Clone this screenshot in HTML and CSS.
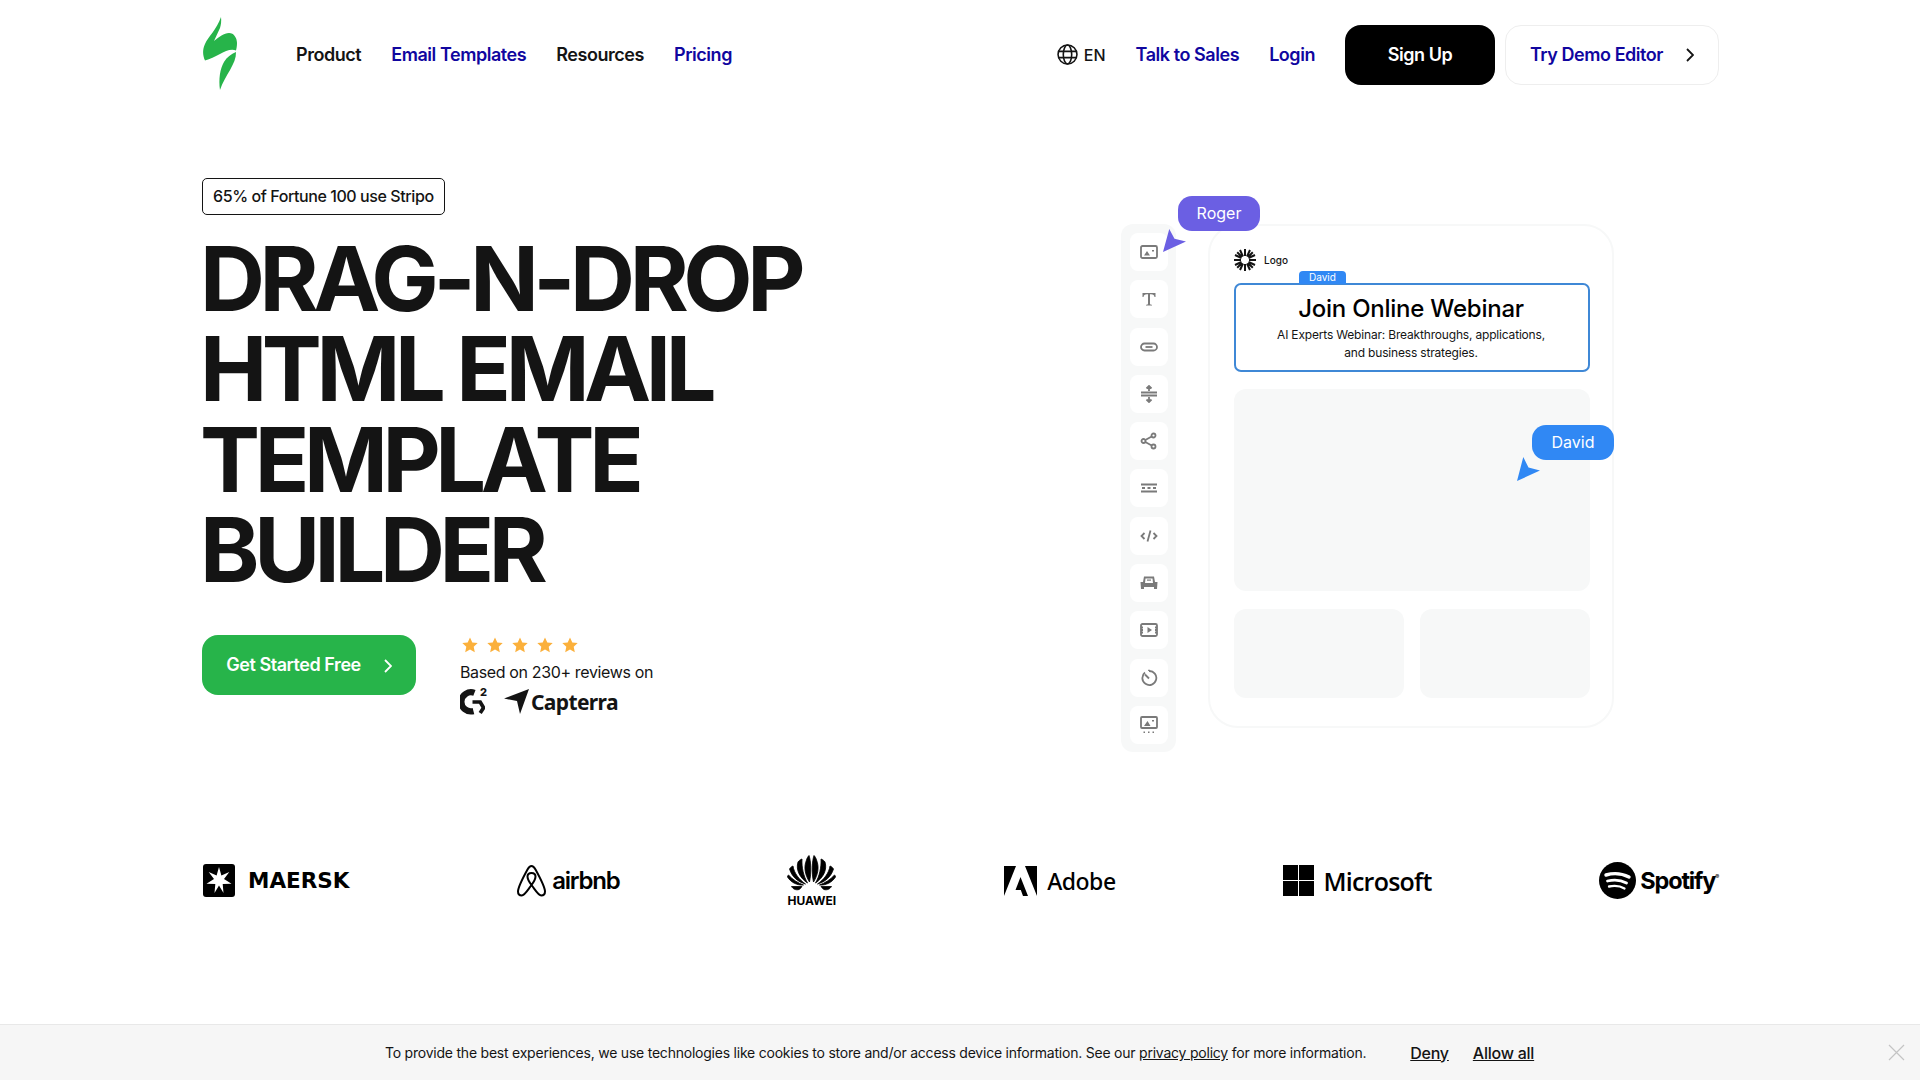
FILE: index.html
```html
<!DOCTYPE html>
<html lang="en">
  <head>
    <meta charset="utf-8">
    <title>Stripo</title>
    <link rel="stylesheet" href="styles.css">
  </head>
  <body>
    <div class="wrap">
      <header class="header">
        <svg class="logo" viewBox="0 0 36 74">
          <path fill="#27b44a" d="M19 0C19.500 4 19 8 18 11L12 24C17 20 22 16 27 16C32 16 35 21 35 26C35 29 34.500 32 34 33.500C25 30 15 41 3 43.500C0.500 38 0.500 32 3 27C6 20 15 12 19 0Z"/>
          <path fill="#27b44a" d="M34 35C34.500 47 23 58 18 73C16.500 62 18 52 22 45C25 40 29 37 34 35Z"/>
        </svg>
        <nav class="nav">
          <a class="nav-link">Product</a>
          <a class="nav-link blue">Email Templates</a>
          <a class="nav-link">Resources</a>
          <a class="nav-link blue">Pricing</a>
        </nav>
        <div class="header-right">
          <span class="lang">
            <svg class="globe" viewBox="0 0 20 20" fill="none" stroke="#141414" stroke-width="1.500">
              <circle cx="10" cy="10" r="9"/>
              <ellipse cx="10" cy="10" rx="4" ry="9"/>
              <path d="M1.500 7H18.500M1.500 13H18.500"/>
            </svg>
            EN
          </span>
          <a class="nav-link blue sales">Talk to Sales</a>
          <a class="nav-link blue login">Login</a>
          <a class="btn btn-black">Sign Up</a>
          <a class="btn btn-outline">
            Try Demo Editor
            <svg class="chevron" viewBox="0 0 8 14" fill="none" stroke="#141414" stroke-width="1.800"><path d="M1 1L7 7L1 13"/></svg>
          </a>
        </div>
      </header>

      <section class="hero">
        <div class="hero-left">
          <span class="badge">65% of Fortune 100 use Stripo</span>
          <h1 class="title">DRAG-N-DROP<br>HTML EMAIL<br>TEMPLATE<br>BUILDER</h1>
          <div class="cta-row">
            <a class="btn btn-green">
              Get Started Free
              <svg class="chevron" viewBox="0 0 8 14" fill="none" stroke="#fff" stroke-width="1.800"><path d="M1 1L7 7L1 13"/></svg>
            </a>
            <div class="reviews">
              <div class="stars">
                <svg viewBox="0 0 16 16"><path d="M8 .5l2.300 5 5.400.6-4 3.700 1.100 5.400L8 12.500l-4.800 2.700 1.100-5.400-4-3.700 5.400-.6z"/></svg>
                <svg viewBox="0 0 16 16"><path d="M8 .5l2.300 5 5.400.6-4 3.700 1.100 5.400L8 12.500l-4.800 2.700 1.100-5.400-4-3.700 5.400-.6z"/></svg>
                <svg viewBox="0 0 16 16"><path d="M8 .5l2.300 5 5.400.6-4 3.700 1.100 5.400L8 12.500l-4.800 2.700 1.100-5.400-4-3.700 5.400-.6z"/></svg>
                <svg viewBox="0 0 16 16"><path d="M8 .5l2.300 5 5.400.6-4 3.700 1.100 5.400L8 12.500l-4.800 2.700 1.100-5.400-4-3.700 5.400-.6z"/></svg>
                <svg viewBox="0 0 16 16"><path d="M8 .5l2.300 5 5.400.6-4 3.700 1.100 5.400L8 12.500l-4.800 2.700 1.100-5.400-4-3.700 5.400-.6z"/></svg>
              </div>
              <p class="reviews-text">Based on 230+ reviews on</p>
              <div class="review-logos">
                <span class="g2">
                  <svg viewBox="0 0 26 27" fill="none" stroke="#141414" stroke-width="6.500">
                    <path d="M15 4.500A10 10 0 1 0 14 23.500"/>
                    <path d="M13 14H21L24.500 20L21 25.500" stroke-width="3.800"/>
                  </svg>
                  <span class="g2-two">2</span>
                </span>
                <span class="capterra">
                  <svg viewBox="0 0 25 25"><path fill="#141414" d="M0 9.500L25 0L16 25L13 12Z"/></svg>
                  Capterra
                </span>
              </div>
            </div>
          </div>
        </div>

        <div class="editor">
          <div class="tools">
            <div class="tool"><svg viewBox="0 0 18 18"><rect x="1" y="3" width="16" height="12" rx="1.500"/><path class="f" d="M4 12.500l3-4.500 3 4.500zM12 7h2v1.500h-2z"/></svg></div>
            <div class="tool"><svg viewBox="0 0 18 18"><path class="f" d="M2.500 3H15.500V7H14.500C14.200 5 13.500 4.200 11 4.200H10V13.500C10 14.500 10.500 14.800 12 14.800V15.500H6V14.800C7.500 14.800 8 14.500 8 13.500V4.200H7C4.500 4.200 3.800 5 3.500 7H2.500Z"/></svg></div>
            <div class="tool"><svg viewBox="0 0 18 18"><rect x="1" y="5.500" width="16" height="7" rx="3.500"/><path d="M5.500 9H12.500"/></svg></div>
            <div class="tool"><svg viewBox="0 0 18 18"><path d="M1 7.500H17M1 10.500H17M9 1V6M9 12V17M6.500 3.500L9 1L11.500 3.500M6.500 14.500L9 17L11.500 14.500"/></svg></div>
            <div class="tool"><svg viewBox="0 0 18 18"><circle cx="3.500" cy="9" r="2"/><circle cx="13.500" cy="3.500" r="2"/><circle cx="13.500" cy="14.500" r="2"/><path d="M5.300 8L11.700 4.500M5.300 10L11.700 13.500"/></svg></div>
            <div class="tool"><svg viewBox="0 0 18 18"><path d="M1 5.500H17M1 12.500H17M2 9H5M7.500 9H10.500M13 9H16"/></svg></div>
            <div class="tool"><svg viewBox="0 0 18 18"><path d="M4.500 6L1.500 9L4.500 12M13.500 6L16.500 9L13.500 12M10.500 3.500L7.500 14.500"/></svg></div>
            <div class="tool"><svg viewBox="0 0 18 18"><path class="f" d="M4 2.500H14L15 8H17.500L17 15H14V13H4V15H1L.5 8H3Z"/><path class="w" d="M5.500 4.500H12.500L13 9H5Z"/><path class="f" d="M7 5.500H11V6.700H7Z"/></svg></div>
            <div class="tool"><svg viewBox="0 0 18 18"><rect x="1" y="3" width="16" height="12" rx="1.500"/><path class="f" d="M7.500 6L12 9L7.500 12Z"/><path d="M1 6.500H3M1 9H3M1 11.500H3M15 6.500H17M15 9H17M15 11.500H17"/></svg></div>
            <div class="tool"><svg viewBox="0 0 18 18"><path d="M5 3.500A7 7 0 1 0 9 2"/><path d="M5 5.500L9 9.500"/><path d="M9 2V.8"/></svg></div>
            <div class="tool"><svg viewBox="0 0 18 18"><rect x="1" y="1" width="16" height="11" rx="1"/><path class="f" d="M4 10l3.500-5 3 5zM12 4h2v1.500h-2z"/><path class="f" d="M3.500 15.500h1.500v1.500h-1.500zM8 15.500h1.500v1.500H8zM12.500 15.500h1.500v1.500h-1.500z"/></svg></div>
          </div>

          <div class="card">
            <div class="card-logo">
              <svg viewBox="0 0 22 22" fill="none" stroke="#141414" stroke-width="2">
                <path d="M11 0V7M11 15V22M0 11H7M15 11H22M3.200 3.200L8 8M14 14L18.800 18.800M3.200 18.800L8 14M14 8L18.800 3.200M6 1L9 7.500M13 14.500L16 21M1 6L7.500 9M14.500 13L21 16M1 16L7.500 13M14.500 9L21 6M6 21L9 14.500M13 7.500L16 1"/>
              </svg>
              <span>Logo</span>
            </div>
            <div class="selected">
              <span class="selected-tag">David</span>
              <h2 class="selected-title">Join Online Webinar</h2>
              <p class="selected-text">AI Experts Webinar: Breakthroughs, applications,<br>and business strategies.</p>
            </div>
            <div class="block block-big"></div>
            <div class="block-row">
              <div class="block"></div>
              <div class="block"></div>
            </div>
          </div>

          <span class="bubble bubble-roger">Roger</span>
          <svg class="cursor cursor-roger" viewBox="0 0 22 22"><path fill="#6b5fe3" d="M6 0L11 9.300L22 12L0 22Z"/></svg>
          <span class="bubble bubble-david">David</span>
          <svg class="cursor cursor-david" viewBox="0 0 22 23"><path fill="#3088f4" d="M6 0L11 10L22 13L0 23Z"/></svg>
        </div>
      </section>

      <section class="brands">
        <div class="brand maersk">
          <svg viewBox="0 0 32 33">
            <rect width="32" height="33" rx="3" fill="#000"/>
            <path fill="#fff" d="M16 3L18.400 11.500L26.300 7.900L21 15L28.500 19.800L19.700 20L20.500 29L16 21.500L11.500 29L12.300 20L3.500 19.800L11 15L5.700 7.900L13.600 11.500Z"/>
          </svg>
          <span>MAERSK</span>
        </div>
        <div class="brand airbnb">
          <svg viewBox="0 0 29 32" fill="none" stroke="#000" stroke-width="2">
            <path d="M14.500 20C11.500 16 10.500 13.500 10.500 11.500C10.500 9.500 12.200 8 14.500 8C16.800 8 18.500 9.500 18.500 11.500C18.500 13.500 17.500 16 14.500 20C10 26 7.500 30.500 4.800 30.500C2.500 30.500 1 28.800 1 26.500C1 23.500 5 14.500 10.500 4.500C12 1.800 13 1 14.500 1C16 1 17 1.800 18.500 4.500C24 14.500 28 23.500 28 26.500C28 28.800 26.500 30.500 24.200 30.500C21.500 30.500 19 26 14.500 20Z"/>
          </svg>
          <span>airbnb</span>
        </div>
        <div class="brand huawei">
          <svg viewBox="0 0 49 37" fill="#000" stroke="#000" stroke-width=".8">
            <path d="M22.500 27C18 20 16.500 12 19.500 5C20 3 21 1.500 22 0.500C24 6 24.500 18 22.500 27Z"/>
            <path d="M26.500 27C31 20 32.500 12 29.500 5C29 3 28 1.500 27 0.500C25 6 24.500 18 26.500 27Z"/>
            <path d="M20.500 28C13 23 8.500 15 11 7C12 5.500 13.500 4.500 15 4C14.500 12 16.500 21 20.500 28Z"/>
            <path d="M28.500 28C36 23 40.500 15 38 7C37 5.500 35.500 4.500 34 4C34.500 12 32.500 21 28.500 28Z"/>
            <path d="M18.500 29C11 27 5 22 2.500 14C3.500 12.500 4.500 11.500 6 11C7 18 12 24.500 18.500 29Z"/>
            <path d="M30.500 29C38 27 44 22 46.500 14C45.500 12.500 44.500 11.500 43 11C42 18 37 24.500 30.500 29Z"/>
            <path d="M16.500 30C10 30.500 4 27.500 0.500 22C0.500 21 1 20.500 1.500 20C5.500 24.500 11 28 16.500 30Z"/>
            <path d="M32.500 30C39 30.500 45 27.500 48.500 22C48.500 21 48 20.500 47.500 20C43.500 24.500 38 28 32.500 30Z"/>
            <path d="M15 31.500H4.500C6 34 9 35.500 12 34.500C13 34 14 33 15 31.500Z"/>
            <path d="M34 31.500H44.500C43 34 40 35.500 37 34.500C36 34 35 33 34 31.500Z"/>
          </svg>
          <span>HUAWEI</span>
        </div>
        <div class="brand adobe">
          <svg viewBox="0 0 33 30" fill="#000">
            <path d="M0 0H12L0 30Z"/>
            <path d="M21 0H33V30Z"/>
            <path d="M16.500 11L24 30H19L16.800 24H11.500Z"/>
          </svg>
          <span>Adobe</span>
        </div>
        <div class="brand microsoft">
          <svg viewBox="0 0 31 31" fill="#000">
            <rect width="15" height="15"/>
            <rect x="16" width="15" height="15"/>
            <rect y="16" width="15" height="15"/>
            <rect x="16" y="16" width="15" height="15"/>
          </svg>
          <span>Microsoft</span>
        </div>
        <div class="brand spotify">
          <svg viewBox="0 0 37 37">
            <circle cx="18.500" cy="18.500" r="18.500" fill="#000"/>
            <g fill="none" stroke="#fff" stroke-linecap="round">
              <path stroke-width="3.400" d="M7 13C14 11 23 11.500 30 15"/>
              <path stroke-width="2.800" d="M8.500 19C14.500 17.500 22 18 27.500 21"/>
              <path stroke-width="2.300" d="M10 24.500C15 23.500 21 23.800 25.500 26.500"/>
            </g>
          </svg>
          <span>Spotify<small class="reg">®</small></span>
        </div>
      </section>
    </div>

    <div class="cookie">
      <p class="cookie-text">To provide the best experiences, we use technologies like cookies to store and/or access device information. See our <a>privacy policy</a> for more information.</p>
      <a class="cookie-btn deny">Deny</a>
      <a class="cookie-btn">Allow all</a>
      <svg class="cookie-close" viewBox="0 0 17 17" fill="none" stroke="#c4c4c4" stroke-width="1.200"><path d="M1 1L16 16M16 1L1 16"/></svg>
    </div>
  </body>
</html>
```

FILE: styles.css
```css
* {
  box-sizing: border-box;
}

body {
  margin: 0;
  background: #fff;
  color: #141414;
  font-family: Inter, "Liberation Sans", sans-serif;
  overflow: hidden;
}

.wrap {
  width: 1516px;
  margin: 0 auto;
}

/* header */
.header {
  display: flex;
  align-items: center;
  height: 110px;
}

.logo {
  width: 36px;
  height: 74px;
  margin: 0 58px 3px 0;
}

.nav {
  display: flex;
  gap: 30px;
}

.nav-link {
  padding-bottom: 2px;
  font-size: 18px;
  font-weight: 600;
  letter-spacing: -0.025em;
}

.blue {
  color: #10069f;
}

.header-right {
  display: flex;
  align-items: center;
  margin: 0 -1px 0 auto;
}

.lang {
  display: flex;
  align-items: center;
  gap: 6px;
  padding-bottom: 1px;
  font-size: 16px;
  font-weight: 500;
  margin-right: 30px;
}

.globe {
  width: 21px;
  height: 21px;
}

.login {
  margin-left: 30px;
  margin-right: 30px;
}

.btn {
  display: flex;
  align-items: center;
  justify-content: center;
  height: 60px;
  padding-bottom: 2px;
  border-radius: 16px;
  font-size: 18px;
  font-weight: 600;
  letter-spacing: -0.025em;
}

.btn-black {
  width: 150px;
  background: #000;
  color: #fff;
}

.btn-outline {
  width: 214px;
  margin-left: 10px;
  gap: 23px;
  border: 1px solid #eee;
  color: #10069f;
}

.btn-green {
  width: 214px;
  gap: 23px;
  padding-bottom: 0;
  background: #27b44a;
  color: #fff;
}

.chevron {
  width: 8px;
  height: 14px;
  margin-top: 2px;
}

/* hero */
.hero {
  display: flex;
  justify-content: space-between;
  padding-top: 68px;
}

.badge {
  display: inline-block;
  padding: 8px 10px;
  height: 37px;
  border: 1px solid #141414;
  border-radius: 5px;
  font-size: 16px;
  font-weight: 500;
  line-height: 19px;
  letter-spacing: -0.026em;
}

.title {
  margin: 19px 0 39px -2px;
  font-size: 90px;
  font-weight: 700;
  line-height: 90.400px;
  letter-spacing: -0.06em;
  color: #141414;
}

.cta-row {
  display: flex;
  gap: 44px;
}

.stars {
  display: flex;
  gap: 9px;
  margin: 2px 0 0 2px;
}

.stars svg {
  width: 16px;
  height: 16px;
  fill: #fbb03b;
}

.reviews-text {
  margin: 9px 0 6px;
  font-size: 16px;
  line-height: 20px;
  letter-spacing: -0.0225em;
}

.review-logos {
  display: flex;
  align-items: center;
  gap: 19px;
}

.g2 {
  position: relative;
  width: 25px;
  height: 27px;
}

.g2 svg {
  width: 25px;
  height: 27px;
  display: block;
}

.g2-two {
  position: absolute;
  top: -3px;
  right: -2px;
  font-size: 11px;
  font-weight: 800;
}

.capterra {
  display: flex;
  align-items: center;
  gap: 2px;
  font-family: "Noto Sans", sans-serif;
  font-size: 21px;
  font-weight: 700;
  letter-spacing: -0.03em;
}

.capterra svg {
  width: 25px;
  height: 25px;
}

/* editor illustration */
.editor {
  position: relative;
  display: flex;
  gap: 32px;
  align-items: flex-start;
  margin: 46px 104px 0 0;
}

.tools {
  display: flex;
  flex-direction: column;
  gap: 9.300px;
  width: 55px;
  padding: 9px 8px 8px 9px;
  background: #f7f8f8;
  border-radius: 12px;
}

.tool {
  display: flex;
  align-items: center;
  justify-content: center;
  height: 38px;
  background: #fff;
  border-radius: 8px;
}

.tool svg {
  width: 18px;
  height: 18px;
  fill: none;
  stroke: #7a7a7a;
  stroke-width: 1.800;
}

.tool .f {
  fill: #7a7a7a;
  stroke: none;
}

.tool .w {
  fill: #fff;
  stroke: none;
}

.card {
  width: 406px;
  height: 504px;
  padding: 23px 22px 0 24px;
  border: 2px solid #f7f8f8;
  border-radius: 30px;
}

.card-logo {
  display: flex;
  align-items: center;
  gap: 8px;
  font-size: 10px;
  font-weight: 500;
}

.card-logo svg {
  width: 22px;
  height: 22px;
}

.selected {
  position: relative;
  height: 89px;
  margin-top: 12px;
  padding: 8px 2px 0 0;
  border: 2px solid #3f88d6;
  border-radius: 7px;
  text-align: center;
}

.selected-tag {
  position: absolute;
  top: -14px;
  left: 63px;
  width: 47px;
  height: 13px;
  background: #3088f4;
  border-radius: 4px 4px 0 0;
  color: #fff;
  font-size: 10px;
  line-height: 13px;
}

.selected-title {
  margin: 0;
  font-size: 24px;
  font-weight: 500;
  line-height: 32px;
  letter-spacing: -0.01em;
  color: #000;
}

.selected-text {
  margin: 1px 0 0;
  font-size: 12px;
  line-height: 18px;
  letter-spacing: -0.015em;
}

.block {
  flex: 1;
  background: #f7f8f8;
  border-radius: 12px;
}

.block-big {
  height: 202px;
  margin-top: 17px;
}

.block-row {
  display: flex;
  gap: 16px;
  height: 89px;
  margin-top: 18px;
}

.bubble {
  position: absolute;
  width: 82px;
  height: 35px;
  border-radius: 14px;
  color: #fff;
  font-size: 16px;
  line-height: 35px;
  text-align: center;
}

.bubble-roger {
  top: -28px;
  left: 57px;
  background: #6b5fe3;
}

.bubble-david {
  top: 201px;
  left: 411px;
  background: #3088f4;
}

.cursor {
  position: absolute;
  width: 23px;
  height: 23px;
}

.cursor-roger {
  top: 5px;
  left: 42px;
}

.cursor-david {
  top: 233px;
  left: 396px;
  height: 24px;
}

/* brand strip */
.brands {
  display: flex;
  justify-content: space-between;
  align-items: center;
  margin-top: 104px;
  height: 50px;
}

.brand {
  display: flex;
  align-items: center;
  color: #000;
}

.maersk {
  margin-left: 1px;
}

.maersk svg {
  width: 32px;
  height: 33px;
}

.maersk span {
  margin-left: 13px;
  font-family: "DejaVu Sans", sans-serif;
  font-size: 21.500px;
  font-weight: 700;
}

.airbnb svg {
  width: 29px;
  height: 32px;
}

.airbnb span {
  margin-left: 6px;
  font-size: 24px;
  font-weight: 600;
  letter-spacing: -0.05em;
}

.huawei {
  flex-direction: column;
  gap: 4px;
}

.huawei svg {
  width: 49px;
  height: 37px;
}

.huawei span {
  font-size: 12px;
  font-weight: 700;
  line-height: 10px;
}

.adobe svg {
  width: 33px;
  height: 30px;
}

.adobe span {
  margin-left: 10px;
  font-family: "Noto Sans", sans-serif;
  font-size: 23px;
  font-weight: 500;
  letter-spacing: -0.02em;
}

.microsoft svg {
  width: 31px;
  height: 31px;
}

.microsoft span {
  margin-left: 9px;
  font-family: "Open Sans", sans-serif;
  font-size: 25px;
  font-weight: 600;
  letter-spacing: -0.03em;
}

.spotify svg {
  width: 37px;
  height: 37px;
}

.spotify span {
  margin-left: 4px;
  font-size: 23.500px;
  font-weight: 700;
  letter-spacing: -0.05em;
}

.reg {
  font-size: 6px;
  vertical-align: 10px;
}

/* cookie bar */
.cookie {
  position: fixed;
  left: 0;
  right: 0;
  bottom: 0;
  display: flex;
  align-items: center;
  height: 56px;
  padding-left: 385px;
  background: #f6f6f6;
  border-top: 1px solid #e8e8e8;
}

.cookie-text {
  margin: 0;
  font-size: 14px;
  font-weight: 400;
  letter-spacing: -0.016em;
}

.cookie-text a {
  text-decoration: underline;
}

.cookie-btn {
  font-size: 16px;
  font-weight: 500;
  letter-spacing: -0.015em;
  text-decoration: underline;
}

.deny {
  margin: 0 24px 0 44px;
}

.cookie-close {
  position: absolute;
  top: 19px;
  right: 15px;
  width: 17px;
  height: 17px;
}
```
